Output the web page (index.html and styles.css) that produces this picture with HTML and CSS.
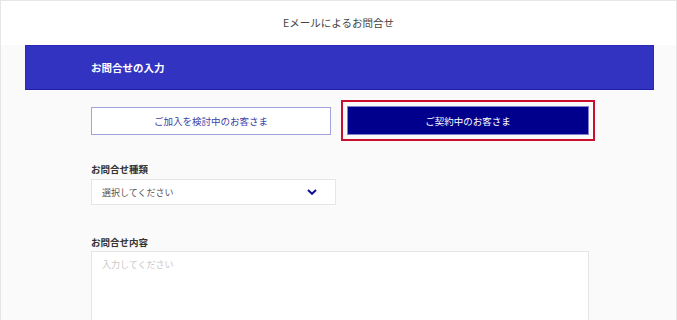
FILE: index.html
```html
<!DOCTYPE html>
<html lang="ja">
<head>
<meta charset="utf-8">
<title>Eメールによるお問合せ</title>
<link rel="stylesheet" href="styles.css">
</head>
<body>
<div class="page">
  <header class="header">Eメールによるお問合せ</header>
  <div class="band"><h1 class="band-title">お問合せの入力</h1></div>
  <main class="content">
    <div class="choice-row">
      <button type="button" class="choice choice-outline">ご加入を検討中のお客さま</button>
      <button type="button" class="choice choice-filled">ご契約中のお客さま</button>
    </div>
    <div class="field">
      <label class="field-label">お問合せ種類</label>
      <div class="select">
        <span class="select-text">選択してください</span>
        <svg class="chevron" width="10" height="6" viewBox="0 0 10 6"><path d="M1 1 L5 4.8 L9 1" fill="none" stroke="#101090" stroke-width="2"/></svg>
      </div>
    </div>
    <div class="field field-second">
      <label class="field-label field-label-tight">お問合せ内容</label>
      <textarea class="textarea" placeholder="入力してください"></textarea>
    </div>
  </main>
</div>
</body>
</html>
```
FILE: styles.css
```css
html, body {
  margin: 0;
  padding: 0;
}
body {
  font-family: "Noto Sans CJK JP", "Noto Sans", sans-serif;
  background: #fafafa;
}
.page {
  height: 319px;
  overflow: hidden;
  border: 1px solid #e6e6e6;
  border-bottom: 0;
  background: #fafafa;
}
.header {
  height: 44px;
  background: #ffffff;
  display: flex;
  align-items: center;
  justify-content: center;
  font-size: 10.5px;
  color: #444444;
  padding-bottom: 1px;
  box-sizing: border-box;
}
.band {
  margin: 0 22px 0 24px;
  height: 45px;
  box-sizing: border-box;
  background: #3333c2;
  border: 1px solid #2a2ab6;
  border-bottom-color: #2020a8;
  display: flex;
  align-items: center;
  padding-left: 65px;
}
.band-title {
  margin: 0;
  font-size: 10.5px;
  font-weight: 700;
  color: #ffffff;
}
.content {
  padding-left: 90px;
  width: 498px;
}
.choice-row {
  display: grid;
  grid-template-columns: 240px 242px;
  column-gap: 16px;
  margin-top: 16px;
}
.choice {
  height: 29px;
  box-sizing: border-box;
  font-family: inherit;
  font-size: 9.5px;
  padding: 0;
  margin: 0;
  cursor: pointer;
}
.choice-outline {
  margin-top: 1px;
  height: 28px;
  background: #ffffff;
  border: 1px solid #a2a2dc;
  color: #4040a8;
}
.choice-filled {
  background: #00008c;
  border: 1px solid #8080cc;
  color: #ffffff;
  outline: 2px solid #c8102e;
  outline-offset: 4px;
}
.field {
  margin-top: 27px;
  display: flex;
  flex-direction: column;
}
.field-second {
  margin-top: 30px;
}
.field-label {
  font-size: 9.5px;
  font-weight: 700;
  color: #333333;
  line-height: 14px;
  margin-bottom: 3px;
}
.field-label-tight {
  margin-bottom: 2px;
}
.select {
  width: 245px;
  height: 26px;
  box-sizing: border-box;
  background: #ffffff;
  border: 1px solid #e6e6e6;
  display: flex;
  align-items: center;
  justify-content: space-between;
  padding: 0 18px 0 10px;
}
.select-text {
  font-size: 9px;
  color: #555555;
}
.chevron {
  display: block;
}
.textarea {
  width: 498px;
  height: 120px;
  box-sizing: border-box;
  background: #ffffff;
  border: 1px solid #e6e6e6;
  padding: 6px 10px;
  margin: 0;
  font-family: inherit;
  font-size: 9px;
  resize: none;
}
.textarea::placeholder {
  color: #c8c8c8;
}
```
